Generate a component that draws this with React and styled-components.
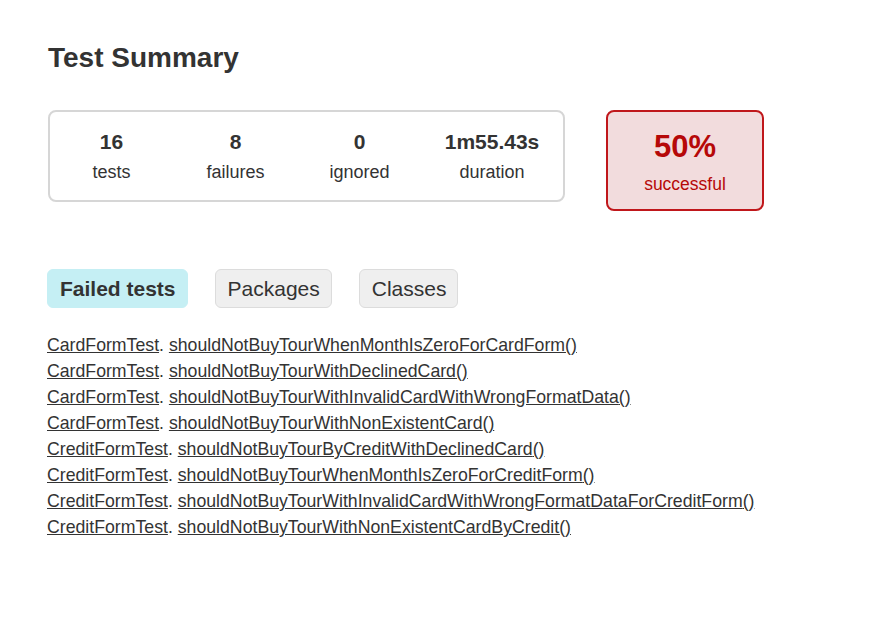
import styled, { createGlobalStyle } from "styled-components";

const GlobalStyle = createGlobalStyle`
    body{
        margin: 0;
        background: #fff;
        font-family: "Liberation Sans", Arial, sans-serif;
        color: #333;
    }
`;
const Page = styled.main`
    padding: 42px 48px 40px 48px;
`;
const Title = styled.h1`
    margin: 0 0 36px;
    font-size: 28px;
    line-height: 32px;
    font-weight: bold;
    color: #333;
`;
const SummaryRow = styled.section`
    display: flex;
    align-items: flex-start;
    gap: 41px;
`;
const Counters = styled.div`
    display: flex;
    gap: 47px;
    width: 517px;
    box-sizing: border-box;
    padding: 18px 24px 16px 23px;
    border: 2px solid #d6d6d6;
    border-radius: 8px;
`;
const Counter = styled.div`
    min-width: 77px;
    display: flex;
    flex-direction: column;
    align-items: center;
    gap: 6px;
    & b{
        font-size: 21px;
        line-height: 24px;
    }
    & span{
        font-size: 18px;
        line-height: 24px;
    }
`;
const Rate = styled.div`
    width: 158px;
    box-sizing: border-box;
    padding: 17px 0 14px;
    display: flex;
    flex-direction: column;
    align-items: center;
    gap: 8px;
    background: #f2dcdd;
    border: 2px solid #c0171b;
    border-radius: 8px;
    color: #b60808;
    & b{
        font-size: 31px;
        line-height: 36px;
    }
    & span{
        font-size: 17.5px;
        line-height: 22px;
    }
`;
const Tabs = styled.ul`
    list-style: none;
    margin: 58px 0 24px -1px;
    padding: 0;
    display: flex;
    gap: 27px;
`;
const Tab = styled.li`
    padding: 6px 11px 6px 12px;
    font-size: 21px;
    line-height: 25px;
    border-radius: 6px;
    box-sizing: border-box;
    border: 1px solid ${({ $active }) => ($active ? "#c5eff4" : "#dcdcdc")};
    background: ${({ $active }) => ($active ? "#c5eff4" : "#efefef")};
    font-weight: ${({ $active }) => ($active ? "bold" : "normal")};
    color: #333;
    cursor: pointer;
`;
const FailedList = styled.ul`
    list-style: none;
    margin: 0 0 0 -1px;
    padding: 0;
    & li{
        font-size: 17.7px;
        line-height: 26px;
        color: #333;
    }
    & a{
        color: #333;
        text-decoration: underline;
    }
`;

const counters = [
    { value: "16", label: "tests" },
    { value: "8", label: "failures" },
    { value: "0", label: "ignored" },
    { value: "1m55.43s", label: "duration" },
];

const failed = [
    ["CardFormTest", "shouldNotBuyTourWhenMonthIsZeroForCardForm"],
    ["CardFormTest", "shouldNotBuyTourWithDeclinedCard"],
    ["CardFormTest", "shouldNotBuyTourWithInvalidCardWithWrongFormatData"],
    ["CardFormTest", "shouldNotBuyTourWithNonExistentCard"],
    ["CreditFormTest", "shouldNotBuyTourByCreditWithDeclinedCard"],
    ["CreditFormTest", "shouldNotBuyTourWhenMonthIsZeroForCreditForm"],
    ["CreditFormTest", "shouldNotBuyTourWithInvalidCardWithWrongFormatDataForCreditForm"],
    ["CreditFormTest", "shouldNotBuyTourWithNonExistentCardByCredit"],
];

const App = () => {
    return <>
        <GlobalStyle />
        <Page>
            <Title>Test Summary</Title>
            <SummaryRow>
                <Counters>
                    {counters.map(c => <Counter key={c.label}>
                        <b>{c.value}</b>
                        <span>{c.label}</span>
                    </Counter>)}
                </Counters>
                <Rate>
                    <b>50%</b>
                    <span>successful</span>
                </Rate>
            </SummaryRow>
            <Tabs>
                <Tab $active>Failed tests</Tab>
                <Tab>Packages</Tab>
                <Tab>Classes</Tab>
            </Tabs>
            <FailedList>
                {failed.map(([cls, method]) => <li key={method}>
                    <a href="#">{cls}</a>. <a href="#">{method}()</a>
                </li>)}
            </FailedList>
        </Page>
    </>
}
export default App
